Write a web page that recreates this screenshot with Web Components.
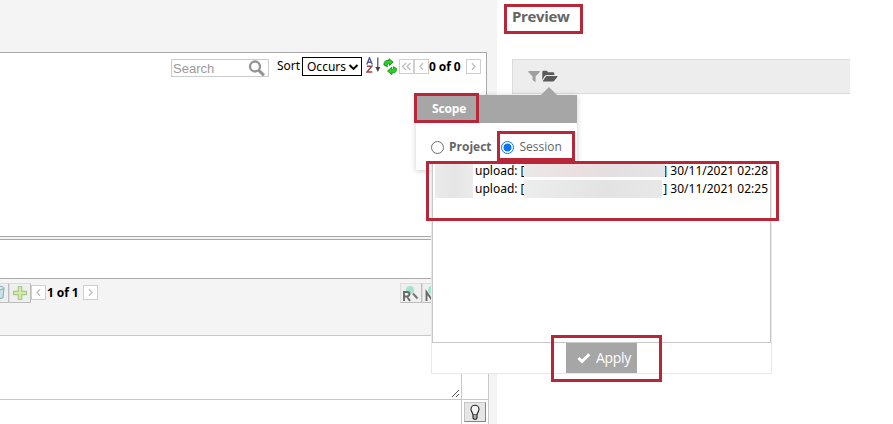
<!DOCTYPE html>
<html lang="en">
<head>
<meta charset="utf-8">
<title>Preview</title>
<style>
html,body{margin:0;height:424px;overflow:hidden;background:#fff}
body{font:12px/16px "Noto Sans","Open Sans",sans-serif;color:#000}
</style>
</head>
<body>
<app-shell>
  <source-pane slot="left"></source-pane>
  <preview-pane slot="right"></preview-pane>
  <session-list slot="over"></session-list>
  <scope-popover slot="over"></scope-popover>
  <mark-box slot="over" style="left:503.500px;top:4px;width:79.500px;height:30px"></mark-box>
  <mark-box slot="over" style="left:414px;top:93px;width:65px;height:30px"></mark-box>
  <mark-box slot="over" style="left:497px;top:131px;width:78px;height:30px"></mark-box>
  <mark-box slot="over" style="left:426px;top:161px;width:353px;height:60px"></mark-box>
  <mark-box slot="over" style="left:551px;top:335px;width:111px;height:47px"></mark-box>
</app-shell>
<script>
const define = (name, html) => customElements.define(name, class extends HTMLElement {
  constructor() {
    super();
    const t = document.createElement('template');
    t.innerHTML = '<style>*{box-sizing:border-box}:host{box-sizing:border-box}svg{display:block}</style>' + html;
    this.attachShadow({mode: 'open'}).append(t.content.cloneNode(true));
  }
});

define('mark-box', `<style>:host{position:absolute;z-index:9;border:3px solid #b82737}</style>`);

define('page-arrow', `<style>:host{display:flex;align-items:center;justify-content:center;width:15px;height:15px;border:1px solid #cfcfcf;background:#fff;flex:none}
  svg{display:none;fill:none;stroke:#bdbdbd;stroke-width:1.3}
  :host([kind=first]) .f,:host([kind=prev]) .p,:host([kind=next]) .n{display:block}</style>
  <svg class="f" width="11" height="9"><path d="M5 1 1.500 4.500 5 8M9.500 1 6 4.500 9.500 8"/></svg>
  <svg class="p" width="7" height="9"><path d="M5 1.200 2 4.500 5 7.800"/></svg>
  <svg class="n" width="7" height="9"><path d="M2 1.200 5 4.500 2 7.800"/></svg>`);

define('tool-button', `<style>:host{display:flex;align-items:center;justify-content:center;width:22px;height:20px;flex:none;background:#efefef;border:1px solid #dcdcdc;border-right-color:#bcbcbc;border-bottom-color:#bcbcbc;overflow:hidden}</style><slot></slot>`);

define('search-field', `<style>:host{display:flex;width:98px;height:18px;border:1px solid #ccc;background:#fff;font:13px/17px "Liberation Sans",sans-serif;color:#9a9a9a;justify-content:space-between;padding:0 2px 0 1px}</style>
  <span>Search</span>
  <svg width="18" height="17" fill="none" stroke="#949494"><circle cx="7" cy="6.500" r="5" stroke-width="2.300"/><path d="M10.700 10.300 16 15.300" stroke-width="3"/></svg>`);

define('source-pane', `<style>
  :host{display:flex;flex-direction:column;height:424px;width:497px;background:#f4f4f4;padding-top:52px}
  .list{width:487px;height:185px;border:1px solid #a8a8a8;border-left:0;background:#fff;padding:4px 5px 0 171px;display:flex;align-items:flex-start}
  search-field{margin-top:2px}
  .sort{margin:1px 0 0 8px;width:25px}
  .sel{display:flex;align-items:center;justify-content:space-between;width:60px;height:19px;border:1px solid #000;padding:1px 2px 0 4px}
  .az{margin:0 0 0 4px}.ref{margin:1px 0 0 1px}
  .list page-arrow{margin-top:2px}
  .list page-arrow[kind=first]{margin-left:1px}
  b{font-size:12px;letter-spacing:-.1px;white-space:nowrap;margin-top:2px}
  .mid{margin-top:2px;height:40px;width:489px;border:1px solid #a8a8a8;border-left:0;background:#fff}
  .bar{height:56px;display:flex;align-items:flex-start;padding-top:4px;width:497px;margin-left:-13px}
  .bar page-arrow{margin-top:2px}
  .bar b{padding-left:1px}
  .grow{width:302px}
  .bottom{width:489px;height:89px;border:1px solid #c8c8c8;border-left:0;border-bottom:0;background:#fff;display:grid;grid-template-columns:461px 1fr;grid-template-rows:64px 1fr}
  .bottom div{border-bottom:1px solid #c8c8c8;display:flex;justify-content:flex-end;align-items:flex-end}
  .bottom div:nth-child(even){border-left:1px solid #c8c8c8}
  .bottom div:nth-child(4){justify-content:center;align-items:flex-start;padding-top:2px}
  .bottom div:nth-child(n+3){border-bottom:0}
  .bulb{background:#e6e6e6;border-color:#c4c4c4 #888 #888 #c4c4c4}
  </style>
  <section class="list">
    <search-field></search-field><span class="sort">Sort</span>
    <span class="sel"><span>Occurs</span><svg width="11" height="7"><path d="M1.500 1 5.500 5 9.500 1" fill="none" stroke="#000" stroke-width="1.900"/></svg></span>
    <svg class="az" width="16" height="18" fill="none"><path d="M.8 7.500 3.500.8 6.300 7.500M1.700 5.200H5.400" stroke="#5652a0" stroke-width="1.400"/><path d="M.8 9.300H5.800L1 14.900H6.300" stroke="#984a4a" stroke-width="1.500"/><path d="M11.800.5V10" stroke="#555" stroke-width="1.300"/><path d="M9.300 10H14.300L11.800 15Z" fill="#444"/></svg>
    <svg class="ref" width="15" height="18" fill="#28d321" stroke="#148c16" stroke-width=".9" stroke-linejoin="round"><path d="M1 7C.8 3.200 3.300 2 6 2.300V.8L10 4 6.500 7.500V5.600C4.500 5.500 4 6.600 4.300 8.800Z"/><path d="M13.500 10.500C13.500 14.300 11.700 15.200 8.900 14.800V16.600L4.500 13 8.700 9.300V11.500C10.300 11.800 10.700 10.500 10.300 8.700Z"/></svg>
    <page-arrow kind="first"></page-arrow><page-arrow kind="prev"></page-arrow><b style="width:37px">0 of 0</b><page-arrow kind="next"></page-arrow>
  </section>
  <section class="mid"></section>
  <section class="bar">
    <tool-button><svg width="20" height="18"><path d="M3 4 4 14Q9 16 15 14L16 4Z" fill="#c7e1ec" stroke="#7fb0c4"/><ellipse cx="9.500" cy="4" rx="6.500" ry="2" fill="#d8edd9" stroke="#7fb0c4"/></svg></tool-button>
    <tool-button><svg width="16" height="16"><path d="M6.300 1.500H9.700V6.300H14.500V9.700H9.700V14.500H6.300V9.700H1.500V6.300H6.300Z" fill="#dcea9a" stroke="#9fcb92" stroke-width="1.200"/></svg></tool-button>
    <page-arrow kind="prev"></page-arrow><b style="width:37px">1 of 1</b><page-arrow kind="next"></page-arrow><span class="grow"></span>
    <tool-button><svg width="20" height="18"><circle cx="9" cy="6" r="4" fill="#a5e2cc"/><path d="M3 17V8H6Q8.500 8 8.500 10T6 12.500H3M6 12.500 9 17" fill="none" stroke="#686868" stroke-width="1.900"/><path d="M12 9.500 16.500 14.500" stroke="#777" stroke-width="2"/></svg></tool-button>
    <tool-button><svg width="20" height="18"><circle cx="9" cy="6" r="4" fill="#a5e2cc"/><path d="M3.500 17V8L9 16V7" fill="none" stroke="#686868" stroke-width="1.900"/></svg></tool-button>
  </section>
  <section class="bottom">
    <div><svg width="11" height="11"><path d="M2 9 9 2M6 9 9 6" stroke="#555"/></svg></div><div></div><div></div>
    <div><tool-button class="bulb"><svg width="12" height="17" fill="none" stroke="#222" stroke-width="1.100"><path d="M4 10.500C3.500 8.500 2 7.500 2 5.200A4 4 0 0 1 10 5.200C10 7.500 8.500 8.500 8 10.500Z" fill="#f5f5f5"/><path d="M4 10.500V14L5 15.300H7L8 14V10.500" fill="#aaa"/></svg></tool-button></div>
  </section>`);

define('preview-pane', `<style>
  :host{display:flex;flex-direction:column;padding:6px 43px 0 15px;gap:32px}
  h2{margin:0;font:bold 15px/21px "Open Sans",sans-serif;color:#666;letter-spacing:-.35px}
  .bar{height:35px;border:1px solid #dcdcdc;border-right:0;background:#ededed;display:flex;align-items:center;gap:2px;padding:0 0 1px 15px}</style>
  <h2>Preview</h2>
  <div class="bar"><svg width="12" height="13"><path d="M.3 1H11.700V2L7.600 6.500V12.300L4.500 10V6.500L.3 2Z" fill="#a0a0a0"/></svg>
  <svg width="16" height="13" fill="#5a5a5a"><path d="M.3 10V2Q.3.800 1.500.800H4.500Q5.700.800 5.700 2.300H11Q12.300 2.300 12.300 3.500V5H5Q3.500 5 2.500 6.300Z"/><path d="M5 6H15Q16 6 15.300 7L12.300 10.800Q11.700 11.600 10.800 11.600H1.200Q.3 11.600 1 10.700L3.700 6.800Q4.200 6 5 6Z"/></svg></div>`);

define('radio-dot', `<style>:host{width:13px;height:13px;border:1px solid #6f6f6f;border-radius:50%;background:#fff;flex:none}
  :host([checked]){border:1.500px solid #0b74f5;background:radial-gradient(circle,#0b74f5 0 3.700px,#fff 4.300px)}</style>`);

define('scope-popover', `<style>
  :host{position:absolute;left:416px;top:95px;width:161px;height:75px;background:#fff;box-shadow:0 1px 6px #0003;z-index:1;font-family:"Open Sans",sans-serif;color:#666}
  i{position:absolute;left:125px;top:-8px;border:8px solid transparent;border-top:0;border-bottom-color:#a6a6a6}
  header{height:28px;background:#a6a6a6;color:#fff;font-weight:bold;padding:6px 0 0 16px;line-height:16px;letter-spacing:-.15px}
  div{display:flex;align-items:center;padding:16px 0 0 15px;line-height:16px}
  b{margin-left:5px;width:50px}span{margin-left:5.500px}</style>
  <i></i><header>Scope</header><div><radio-dot></radio-dot><b>Project</b><radio-dot checked style="margin-left:2px"></radio-dot><span>Session</span></div>`);

define('session-row', `<style>:host{display:flex;height:18px;line-height:18px;white-space:pre}
  .n{width:38px;background:linear-gradient(90deg,#ebebeb,#e5e5e5 50%,#ececec)}.u{width:51px;padding-left:2px}
  .m{height:18px;background:linear-gradient(90deg,#ededed,#e4e3e3 60%,#e8e8e8);width:138px}
  :host(:first-child) .m{height:15px;width:141px;margin-right:-3px;position:relative;background:linear-gradient(90deg,#ebe9e9,#ecdfe0 35%,#e2e0e0 65%,#e6e5e5)}
  .c{flex:1;text-align:right}</style>
  <span class="n"></span><span class="u">upload: [</span><span class="m"></span><span class="c"><slot></slot></span>`);

define('session-list', `<style>
  :host{position:absolute;left:431px;top:163px;width:341px;height:211px;background:#fff;border:1px solid #e8e8e8;border-top:0;z-index:2;display:flex;flex-direction:column;align-items:center}
  .rows{width:339px;height:180px;border:1px solid #c8c8c8;border-top:0;overflow:hidden;padding:0 2px}
  session-row:first-child{margin-top:-1px}
  button{all:unset;box-sizing:border-box;width:71px;height:30px;background:#a6a6a6;color:#fff;display:flex;align-items:center;gap:5px;padding-left:11px;font:14px/20px "Open Sans",sans-serif;letter-spacing:-.3px}</style>
  <div class="rows"><session-row>] 30/11/2021 02:28</session-row><session-row>] 30/11/2021 02:25</session-row></div>
  <button><svg width="14" height="12"><path d="M1.500 6 5 9.500 12.300 2.200" fill="none" stroke="#fff" stroke-width="3"/></svg>Apply</button>`);

define('app-shell', `<style>:host{position:relative;display:grid;grid-template-columns:497px 1fr;width:893px;height:424px;overflow:hidden;background:#fff}</style>
  <slot name="left"></slot><slot name="right"></slot><slot name="over"></slot>`);
</script>
</body>
</html>
